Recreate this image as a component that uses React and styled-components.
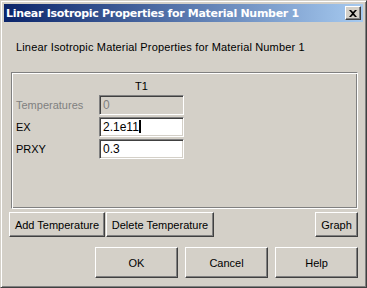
import React from "react";
import styled, { createGlobalStyle } from "styled-components";

const Global = createGlobalStyle`
  html, body { margin: 0; padding: 0; background: #d4d0c8; }
  body { font-family: "Liberation Sans", Arial, sans-serif; font-size: 11px; color: #000; }
`;

const Window = styled.div`
  width: 367px;
  height: 288px;
  box-sizing: border-box;
  background: #d4d0c8;
  border: 1px solid;
  border-color: #d4d0c8 #404040 #404040 #d4d0c8;
  box-shadow: inset 1px 1px 0 #fff, inset -1px -1px 0 #808080;
  padding: 3px;
  display: flex;
  flex-direction: column;
`;

const TitleBar = styled.div`
  height: 18px;
  display: flex;
  align-items: center;
  justify-content: space-between;
  padding: 0 2px 0 2px;
  background: linear-gradient(to right, #0a246a, #a6caf0);
  color: #fff;
  font-family: "DejaVu Sans", Verdana, sans-serif;
  font-weight: bold;
  font-size: 11px;
  letter-spacing: -0.3px;
`;

const CloseBtn = styled.div`
  width: 16px;
  height: 14px;
  box-sizing: border-box;
  background: #d4d0c8;
  border: 1px solid;
  border-color: #fff #404040 #404040 #fff;
  box-shadow: inset -1px -1px 0 #808080;
  display: flex;
  align-items: center;
  justify-content: center;
`;

const Body = styled.div`
  flex: 1;
  display: flex;
  flex-direction: column;
  padding: 0 5px 0 7px;
`;

const Heading = styled.div`
  margin-top: 19px;
  padding-left: 5px;
  height: 15px;
  letter-spacing: 0.15px;
`;

const Group = styled.div`
  margin-top: 16px;
  height: 137px;
  box-sizing: border-box;
  border: 1px solid;
  border-color: #808080 #fff #fff #808080;
  box-shadow: inset 1px 1px 0 #fff, inset -1px -1px 0 #808080;
  padding: 0 0 0 3px;
`;

const Grid = styled.div`
  display: grid;
  grid-template-columns: 84px 85px;
  grid-auto-rows: 20px;
  row-gap: 2px;
`;

const ColHead = styled.div`
  grid-column: 2;
  align-self: end;
  text-align: center;
  line-height: 14px;
`;

const Label = styled.div`
  line-height: 20px;
  padding-left: 1px;
  color: ${p => (p.$disabled ? "#808080" : "#000")};
`;

const Field = styled.div`
  box-sizing: border-box;
  height: 20px;
  border: 1px solid;
  border-color: #808080 #fff #fff #808080;
  box-shadow: inset 1px 1px 0 #404040, inset -1px -1px 0 #d4d0c8;
  background: ${p => (p.$disabled ? "#d4d0c8" : "#fff")};
  color: ${p => (p.$disabled ? "#808080" : "#000")};
  padding: 0 3px;
  line-height: 18px;
  font-size: 12px;
`;

const Caret = styled.span`
  display: inline-block;
  width: 2px;
  height: 13px;
  background: #000;
  vertical-align: -2px;
`;

const ButtonRow = styled.div`
  display: flex;
  margin: 3px 0 0 -2px;
  gap: 1px;
`;

const Spacer = styled.div`
  flex: 1;
`;

const Button = styled.div`
  box-sizing: border-box;
  height: ${p => p.$h || 25}px;
  width: ${p => p.$w}px;
  border: 1px solid;
  border-color: #fff #404040 #404040 #fff;
  box-shadow: inset -1px -1px 0 #808080, inset 1px 1px 0 #d4d0c8;
  display: flex;
  align-items: center;
  justify-content: center;
  font-size: 11px;
  white-space: nowrap;
`;

const Footer = styled.div`
  display: flex;
  justify-content: flex-end;
  gap: 7px;
  margin-top: 10px;
`;

export default function App() {
  return (
    <>
      <Global />
      <Window>
        <TitleBar>
          <span>Linear Isotropic Properties for Material Number 1</span>
          <CloseBtn>
            <svg width="8" height="7" viewBox="0 0 8 7">
              <path d="M0 0h2l2 2 2-2h2L5 3.5 8 7H6L4 5 2 7H0l3-3.5z" fill="#000" />
            </svg>
          </CloseBtn>
        </TitleBar>
        <Body>
          <Heading>Linear Isotropic Material Properties for Material Number 1</Heading>
          <Group>
            <Grid>
              <ColHead>T1</ColHead>
              <Label $disabled>Temperatures</Label>
              <Field $disabled>0</Field>
              <Label>EX</Label>
              <Field>2.1e11<Caret /></Field>
              <Label>PRXY</Label>
              <Field>0.3</Field>
            </Grid>
          </Group>
          <ButtonRow>
            <Button $w={96}>Add Temperature</Button>
            <Button $w={108}>Delete Temperature</Button>
            <Spacer />
            <Button $w={43}>Graph</Button>
          </ButtonRow>
          <Footer>
            <Button $w={83} $h={31}>OK</Button>
            <Button $w={83} $h={31}>Cancel</Button>
            <Button $w={83} $h={31}>Help</Button>
          </Footer>
        </Body>
      </Window>
    </>
  );
}
